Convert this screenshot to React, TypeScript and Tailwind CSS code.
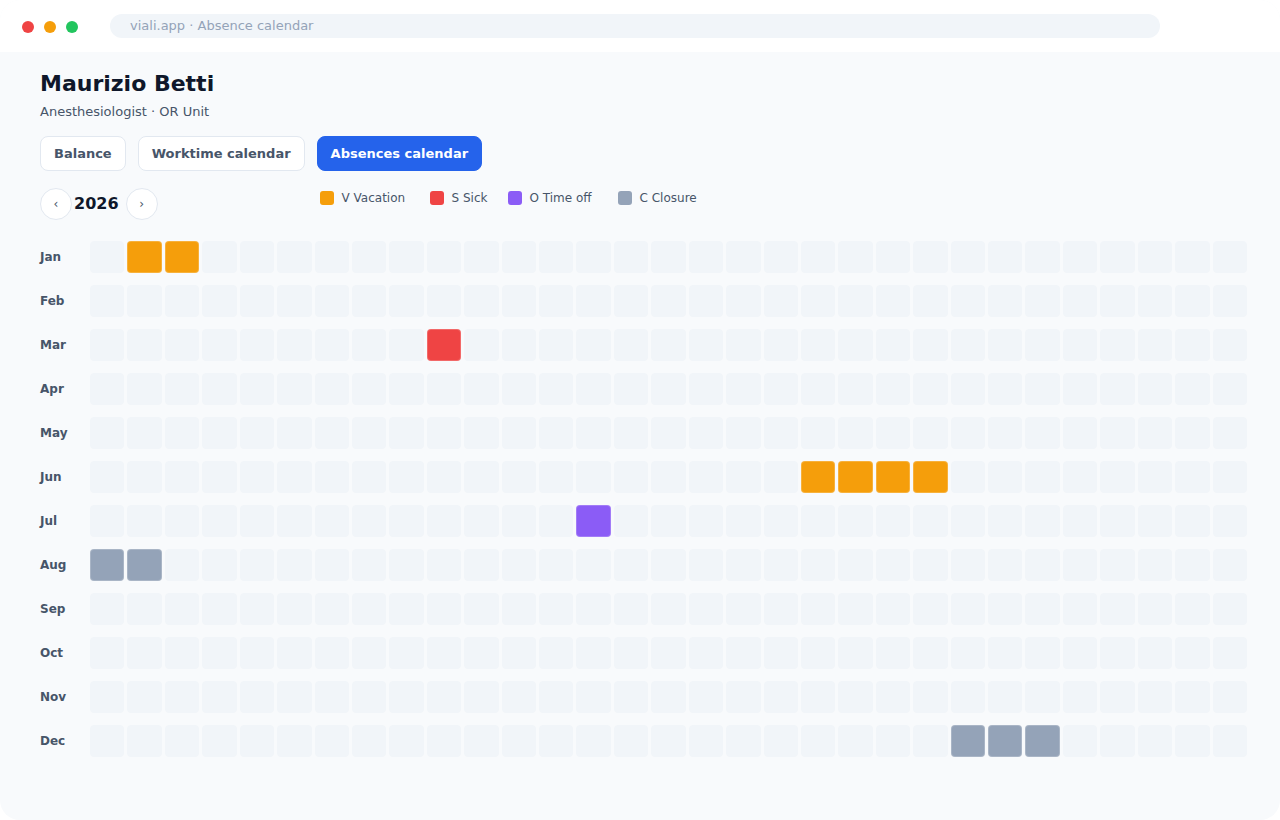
import React from 'react';

type Kind = 'V' | 'S' | 'O' | 'C';

const months = ['Jan', 'Feb', 'Mar', 'Apr', 'May', 'Jun', 'Jul', 'Aug', 'Sep', 'Oct', 'Nov', 'Dec'];

// month index -> day -> absence kind
const absences: Record<number, Record<number, Kind>> = {
  0: { 2: 'V', 3: 'V' },
  2: { 10: 'S' },
  5: { 20: 'V', 21: 'V', 22: 'V', 23: 'V' },
  6: { 14: 'O' },
  7: { 1: 'C', 2: 'C' },
  11: { 24: 'C', 25: 'C', 26: 'C' },
};

const cellColor: Record<Kind, string> = {
  V: 'bg-[#f59e0b]',
  S: 'bg-[#ef4444]',
  O: 'bg-[#8b5cf6]',
  C: 'bg-[#94a3b8]',
};

const legend: { kind: Kind; label: string; width: string }[] = [
  { kind: 'V', label: 'V Vacation', width: 'w-[110px]' },
  { kind: 'S', label: 'S Sick', width: 'w-[78px]' },
  { kind: 'O', label: 'O Time off', width: 'w-[110px]' },
  { kind: 'C', label: 'C Closure', width: '' },
];

const days = Array.from({ length: 31 }, (_, i) => i + 1);

export default function App() {
  return (
    <div className="w-[1280px] h-[820px] bg-white font-['DejaVu_Sans',sans-serif]">
      <div className="w-full h-full rounded-[20px] overflow-hidden flex flex-col bg-[#f8fafc]">
        {/* Window bar */}
        <div className="h-[52px] bg-white flex items-center shrink-0">
          <div className="flex items-center gap-[10px] pl-[22px] mt-[1px]">
            <span className="w-3 h-3 rounded-full bg-[#ef4444]" />
            <span className="w-3 h-3 rounded-full bg-[#f59e0b]" />
            <span className="w-3 h-3 rounded-full bg-[#22c55e]" />
          </div>
          <div className="ml-[32px] w-[1050px] h-6 rounded-full bg-[#f1f5f9] flex items-center pl-5 text-[13px] text-[#94a3b8]">
            viali.app · Absence calendar
          </div>
        </div>

        {/* Body */}
        <div className="pl-10 pr-[33px] pt-4">
          <h1 className="text-[22px] leading-8 font-bold text-[#0f172a]">Maurizio Betti</h1>
          <p className="text-[13px] leading-5 text-[#475569] mt-[2px]">Anesthesiologist · OR Unit</p>

          <div className="flex gap-3 mt-[14px]">
            <button className="h-[35px] px-[13px] rounded-lg border border-[#e2e8f0] bg-white text-[13px] font-bold text-[#475569]">
              Balance
            </button>
            <button className="h-[35px] px-[13px] rounded-lg border border-[#e2e8f0] bg-white text-[13px] font-bold text-[#475569]">
              Worktime calendar
            </button>
            <button className="h-[35px] px-[13px] rounded-lg border border-[#2563eb] bg-[#2563eb] text-[13px] font-bold text-white">
              Absences calendar
            </button>
          </div>

          <div className="flex items-start mt-[17px]">
            <div className="flex items-center">
              <button className="w-8 h-8 rounded-full border border-[#e2e8f0] bg-white text-[12px] text-[#475569] flex items-center justify-center">
                ‹
              </button>
              <span className="ml-[2px] mr-[7px] text-[16px] font-bold text-[#0f172a]">2026</span>
              <button className="w-8 h-8 rounded-full border border-[#e2e8f0] bg-white text-[12px] text-[#475569] flex items-center justify-center">
                ›
              </button>
            </div>
            <div className="flex items-center ml-[162px] mt-[2px]">
              {legend.map((l) => (
                <div key={l.kind} className={`flex items-center gap-2 text-[12px] leading-4 text-[#475569] ${l.width}`}>
                  <span className={`w-[14px] h-[14px] rounded-[3px] ${cellColor[l.kind]}`} />
                  {l.label}
                </div>
              ))}
            </div>
          </div>

          {/* Calendar grid */}
          <div className="mt-[21px] flex flex-col gap-3">
            {months.map((m, mi) => (
              <div key={m} className="flex items-center">
                <div className="w-[50px] shrink-0 text-[12px] font-bold text-[#475569]">{m}</div>
                <div className="flex-1 grid grid-cols-[repeat(31,minmax(0,1fr))] gap-[3px]">
                  {days.map((d) => {
                    const k = absences[mi]?.[d];
                    return (
                      <div
                        key={d}
                        className={`h-8 rounded-[4px] border ${
                          k ? `${cellColor[k]} border-white/20` : 'bg-[#f1f5f9] border-[#f1f5f9]'
                        }`}
                      />
                    );
                  })}
                </div>
              </div>
            ))}
          </div>
        </div>
      </div>
    </div>
  );
}
